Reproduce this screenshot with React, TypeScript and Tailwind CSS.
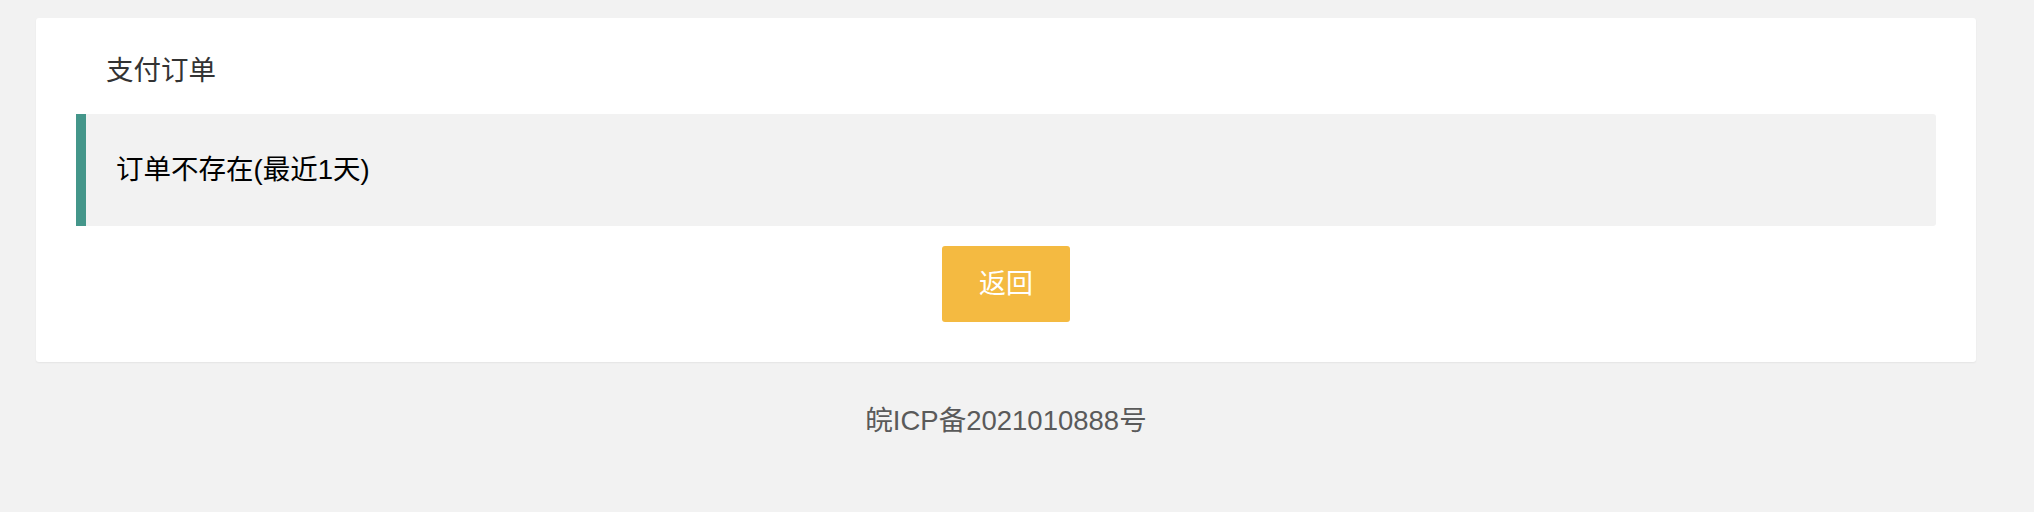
export default function App() {
  return (
    <div
      className="min-h-[512px] w-full bg-[#f2f2f2] pt-[18px]"
      style={{ fontFamily: '"Liberation Sans", "Noto Sans CJK SC", sans-serif' }}
    >
      <div className="ml-[36px] w-[1940px] rounded-[3px] bg-white px-[40px] pb-[40px] pt-[33px] shadow-[0_1px_2px_rgba(0,0,0,0.06)]">
        <h1 className="mb-[23px] pl-[30px] text-[27.5px] leading-[40px] font-normal text-[#333]">支付订单</h1>

        <div className="flex h-[112px] items-center rounded-r-[3px] border-l-[10px] border-[#44968a] bg-[#f2f2f2] pl-[30px]">
          <p className="text-[27.5px] text-black">订单不存在(最近1天)</p>
        </div>

        <div className="mt-[20px] flex justify-center">
          <button className="h-[76px] w-[128px] rounded-[3px] bg-[#f4ba41] text-[27px] text-white">返回</button>
        </div>
      </div>

      <div className="mt-[39px] w-[1940px] ml-[36px] text-center text-[27.5px] leading-[40px] text-[#5a5a5a]">
        皖ICP备2021010888号
      </div>
    </div>
  );
}
